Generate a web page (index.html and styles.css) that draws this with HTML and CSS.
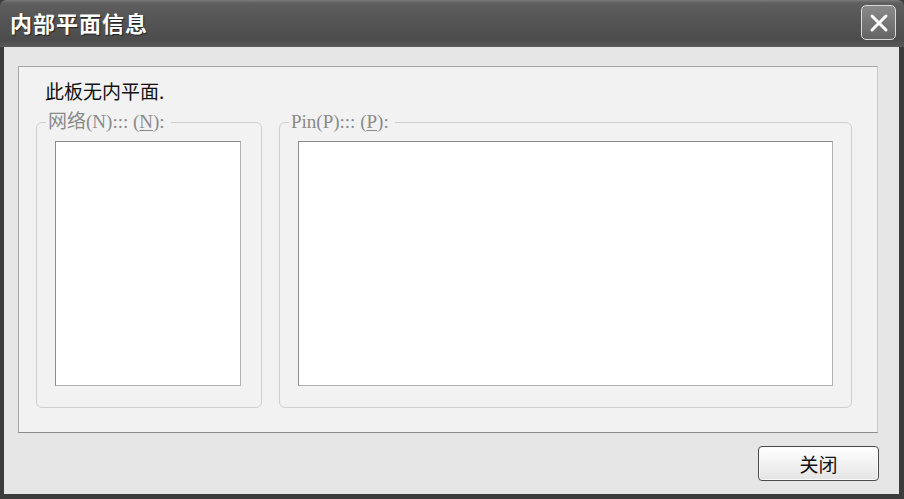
FILE: index.html
```html
<!DOCTYPE html>
<html lang="zh">
<head>
<meta charset="utf-8">
<title>内部平面信息</title>
<link rel="stylesheet" href="styles.css">
</head>
<body>
<div class="window">
  <div class="titlebar">
    <span class="title">内部平面信息</span>
    <button class="close" aria-label="关闭">
      <svg width="22" height="22" viewBox="0 0 22 22"><path d="M4 4 L18 18 M18 4 L4 18" stroke="#fff" stroke-width="3" stroke-linecap="round"/></svg>
    </button>
  </div>
  <div class="client">
    <div class="panel">
      <div class="msg">此板无内平面.</div>
      <div class="groups">
        <fieldset class="group group-net">
          <legend>网络(N)::: (<u>N</u>):</legend>
          <div class="listbox"></div>
        </fieldset>
        <fieldset class="group group-pin">
          <legend>Pin(P)::: (<u>P</u>):</legend>
          <div class="listbox"></div>
        </fieldset>
      </div>
    </div>
    <div class="footer">
      <button class="btn">关闭</button>
    </div>
  </div>
</div>
</body>
</html>
```
FILE: styles.css
```css
html, body {
  margin: 0;
  padding: 0;
  width: 904px;
  height: 499px;
  overflow: hidden;
  background: #3c3c3c;
}
.window {
  width: 904px;
  height: 499px;
  box-sizing: border-box;
  display: flex;
  flex-direction: column;
  background: #3c3c3c;
  border-radius: 6px 6px 0 0;
  overflow: hidden;
}
.titlebar {
  height: 47px;
  flex: none;
  display: flex;
  align-items: center;
  justify-content: space-between;
  padding: 0 8px 0 10px;
  background: linear-gradient(#7a7a7a 0px, #5e5e5e 3px, #555 20px, #4c4c4c 40px, #5a5a5a 47px);
}
.title {
  color: #fff;
  font-family: "Noto Sans CJK SC", sans-serif;
  font-weight: 700;
  font-size: 22px;
  letter-spacing: 1px;
  text-shadow: 1px 1px 1px #222;
  margin-top: -3px;
}
.close {
  width: 35px;
  height: 35px;
  margin-top: -2px;
  padding: 0;
  border: 1.5px solid #d8d8d8;
  border-radius: 5px;
  background: linear-gradient(#8a8a8a, #646464);
  display: flex;
  align-items: center;
  justify-content: center;
}
.client {
  flex: 1;
  margin: 0 5px 5px 4px;
  background: #e6e6e6;
  display: flex;
  flex-direction: column;
  padding: 19px 21px 0 14px;
}
.panel {
  height: 367px;
  box-sizing: border-box;
  border: 1px solid #a6a6a6;
  border-right-color: #c8c8c8;
  border-bottom-color: #8a8a8a;
  background: #f2f2f2;
  padding: 12px 25px 0 17px;
}
.msg {
  font-family: "Noto Sans CJK SC", sans-serif;
  font-size: 19px;
  color: #111;
  margin-left: 9px;
  line-height: 24px;
}
.groups {
  display: flex;
  gap: 17px;
  margin-top: 9px;
}
.group {
  margin: 0;
  box-sizing: border-box;
  border: 1px solid #cfcfcf;
  border-radius: 6px;
  padding: 9px 20px 21px 18px;
}
.group-net { width: 226px; }
.group-pin { width: 573px; padding-right: 18px; }
.group legend {
  font-family: "Liberation Serif", "Noto Sans CJK SC", serif;
  font-size: 19px;
  color: #8a8a8a;
  padding: 0 6px 0 2px;
  margin-left: -9px;
  line-height: 20px;
}
.group legend u {
  text-decoration-thickness: 1px;
  text-underline-offset: 2px;
}
.listbox {
  height: 245px;
  box-sizing: border-box;
  border: 1px solid #8c8c8c;
  border-right-color: #b0b0b0;
  border-bottom-color: #b0b0b0;
  background: #fff;
}
.footer {
  flex: 1;
  display: flex;
  justify-content: flex-end;
  align-items: flex-start;
  padding-top: 13px;
  margin-right: -1px;
}
.btn {
  width: 121px;
  height: 35px;
  border: 1px solid #4a4a4a;
  border-radius: 4px;
  background: linear-gradient(#ffffff, #f2f2f2 50%, #e4e4e4);
  box-shadow: inset 0 0 0 1px #fafafa;
  font-family: "Noto Sans CJK SC", sans-serif;
  font-size: 19px;
  color: #111;
  padding: 0;
}
```
